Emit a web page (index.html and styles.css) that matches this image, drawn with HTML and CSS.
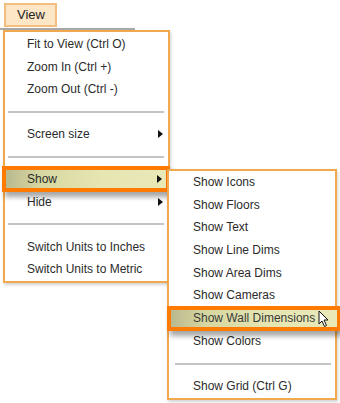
FILE: index.html
```html
<!DOCTYPE html>
<html>
  <head>
    <title>View menu</title>
    <link rel="stylesheet" href="styles.css">
  </head>
  <body>
    <div class="bar">
      <span class="view">View</span>
    </div>
    <div class="rule"></div>

    <div class="menu main">
      <div class="item">Fit to View (Ctrl O)</div>
      <div class="item">Zoom In (Ctrl +)</div>
      <div class="item">Zoom Out (Ctrl -)</div>
      <div class="sep"></div>
      <div class="item">Screen size <span class="arrow"></span></div>
      <div class="sep"></div>
      <div class="item hot">Show <span class="arrow"></span></div>
      <div class="item">Hide <span class="arrow"></span></div>
      <div class="sep"></div>
      <div class="item">Switch Units to Inches</div>
      <div class="item">Switch Units to Metric</div>
    </div>

    <div class="menu submenu">
      <div class="item">Show Icons</div>
      <div class="item">Show Floors</div>
      <div class="item">Show Text</div>
      <div class="item">Show Line Dims</div>
      <div class="item">Show Area Dims</div>
      <div class="item">Show Cameras</div>
      <div class="item hot">Show Wall Dimensions</div>
      <div class="item">Show Colors</div>
      <div class="sep"></div>
      <div class="item">Show Grid (Ctrl G)</div>
    </div>

    <svg class="cursor" width="12" height="20" viewBox="0 0 12 20">
      <path d="M1 1 L1 14 L4 11 L6.5 16.5 L8.5 15.5 L6 10 L10 10 Z" fill="#fff" stroke="#111" stroke-width="1"/>
    </svg>
  </body>
</html>
```

FILE: styles.css
```css
body {
  margin: 0;
  background: #fff;
  font-family: "Liberation Sans", Arial, sans-serif;
  font-size: 12px;
  color: #2b2b2b;
  position: relative;
  width: 340px;
  height: 403px;
  overflow: hidden;
}

.bar {
  padding: 3px 0 1px 4px;
}
.view {
  display: block;
  box-sizing: border-box;
  width: 53px;
  height: 24px;
  line-height: 20px;
  padding-left: 11px;
  font-size: 13px;
  background: #fde6c6;
  border: 2px solid #f3bd80;
  color: #222;
}
.rule {
  width: 135px;
  height: 2px;
  background: #a9a9a9;
}

.menu {
  background: #fff;
  border: 2px solid #f1a94f;
  box-shadow: 1px 2px 3px rgba(0, 0, 0, 0.18);
}
.main {
  width: 163px;
  margin-left: 3px;
  padding-top: 1px;
}
.submenu {
  position: absolute;
  left: 167px;
  top: 169px;
  width: 166px;
}

.item {
  height: 22.5px;
  line-height: 22.5px;
  padding: 0 5px 0 22px;
  display: flex;
  align-items: center;
  justify-content: space-between;
  white-space: nowrap;
}
.submenu .item {
  height: 22.7px;
  line-height: 22.7px;
  padding-left: 24px;
}
.sep {
  height: 22.5px;
  display: flex;
  align-items: center;
  padding: 0 4px 0 3px;
}
.sep::before {
  content: "";
  flex: 1;
  height: 2px;
  background: #c4c4c4;
}
.submenu .sep {
  padding: 0 4px 0 6px;
}

.arrow {
  width: 0;
  height: 0;
  border-left: 5px solid #111;
  border-top: 4px solid transparent;
  border-bottom: 4px solid transparent;
}

.hot {
  position: relative;
  box-sizing: border-box;
  border: 4px solid #ff7a00;
  background: linear-gradient(90deg, #b9b98f 0%, #d6d6a0 20%, #e6e6b3 60%, #e9e9b8 100%);
  box-shadow: 3px 5px 5px rgba(0, 0, 0, 0.35);
}
.main .hot {
  height: 26px;
  line-height: 18px;
  margin: -1.75px -2px -1.75px -3px;
  padding: 0 4px 0 21px;
}
.submenu .hot {
  height: 25px;
  line-height: 17px;
  margin: -1.15px -6px -1.15px -2px;
  padding-left: 22px;
  color: #3a3a3a;
}

.cursor {
  position: absolute;
  left: 318px;
  top: 310px;
}
```
